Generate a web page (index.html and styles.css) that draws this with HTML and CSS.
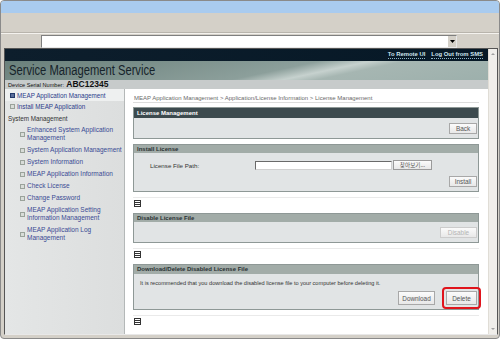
FILE: index.html
```html
<!DOCTYPE html>
<html>
<head>
<meta name="viewport" content="width=device-width, initial-scale=1">
<link rel="stylesheet" href="styles.css">
<title>Service Management Service</title>
</head>
<body>

<div class="window">
    <div class="titlebar"></div>
    <div class="toolbar"></div>
    <div class="addressbar">
        <div class="address">
            <span class="drop"><svg width="5" height="3" viewBox="0 0 5 3"><path d="M0 0h5L2.5 3z" fill="#000"/></svg></span>
        </div>
    </div>

    <div class="viewport">
        <div class="page">
            <div class="topbar">
                <a class="toplink">To Remote UI</a>
                <a class="toplink">Log Out from SMS</a>
            </div>
            <div class="titleband"><span class="title_text">Service Management Service</span></div>
            <div class="serial"><span class="serial_label">Device Serial Number:</span> <b>ABC12345</b></div>

            <div class="mainrow">
                <div class="sidebar">
                    <div class="nav_item selected"><span class="bullet dark"></span>MEAP Application Management</div>
                    <div class="nav_item short"><span class="bullet"></span>Install MEAP Application</div>
                    <div class="nav_head">System Management</div>
                    <div class="sub_item"><span class="bullet"></span><span>Enhanced System Application Management</span></div>
                    <div class="sub_item"><span class="bullet"></span><span>System Application Management</span></div>
                    <div class="sub_item"><span class="bullet"></span><span>System Information</span></div>
                    <div class="sub_item"><span class="bullet"></span><span>MEAP Application Information</span></div>
                    <div class="sub_item"><span class="bullet"></span><span>Check License</span></div>
                    <div class="sub_item"><span class="bullet"></span><span>Change Password</span></div>
                    <div class="sub_item"><span class="bullet"></span><span>MEAP Application Setting Information Management</span></div>
                    <div class="sub_item"><span class="bullet"></span><span>MEAP Application Log Management</span></div>
                </div>

                <div class="content">
                    <div class="crumbs">MEAP Application Management &gt; Application/License Information &gt; License Management</div>

                    <div class="panel">
                        <div class="panel_head dark_head">License Management</div>
                        <div class="panel_body right">
                            <button class="btn">Back</button>
                        </div>
                    </div>

                    <div class="panel">
                        <div class="panel_head">Install License</div>
                        <div class="panel_body install_body">
                            <div class="file_row">
                                <span class="file_label">License File Path:</span>
                                <span class="file_input"></span>
                                <button class="btn browse">찾아보기...</button>
                            </div>
                            <div class="right"><button class="btn">Install</button></div>
                        </div>
                    </div>
                    <div class="sep"><span class="top_icon"></span></div>

                    <div class="panel">
                        <div class="panel_head">Disable License File</div>
                        <div class="panel_body right">
                            <button class="btn disabled">Disable</button>
                        </div>
                    </div>
                    <div class="sep"><span class="top_icon"></span></div>

                    <div class="panel">
                        <div class="panel_head tall_head">Download/Delete Disabled License File</div>
                        <div class="panel_body download_body">
                            <div class="note">It is recommended that you download the disabled license file to your computer before deleting it.</div>
                            <div class="right wide_gap">
                                <button class="btn download">Download</button>
                                <span class="highlight"><button class="btn delete">Delete</button></span>
                            </div>
                        </div>
                    </div>
                    <div class="sep"><span class="top_icon"></span></div>
                </div>
            </div>
        </div>
        <div class="scrollbar">
            <span class="arrow up"></span>
            <span class="arrow down"></span>
        </div>
    </div>
    <div class="statusbar"></div>
</div>

</body>
</html>
```

FILE: styles.css
```css
body {
    margin: 0;
    background-color: #ffffff;
    font-family: "Liberation Sans", Arial, sans-serif;
}

.window {
    width: 498px;
    height: 337px;
    border: 1px solid #8a8a8a;
    border-radius: 4px;
    background-color: #d4d0c8;
    display: flex;
    flex-direction: column;
    overflow: hidden;
}

.titlebar {
    height: 12px;
    background-color: #a9cbef;
}

.toolbar {
    height: 19px;
    border-bottom: 1px solid #b8b4ac;
}

.addressbar {
    height: 14px;
    padding-left: 40px;
    border-top: 1px solid #f4f2ee;
}

.address {
    width: 414px;
    height: 11px;
    margin-top: 1px;
    background-color: #ffffff;
    border: 1px solid #7f7f7f;
    border-right-color: #e8e8e8;
    border-bottom-color: #e8e8e8;
    display: flex;
    justify-content: flex-end;
}

.drop {
    width: 8px;
    height: 11px;
    background-color: #d4d0c8;
    border-left: 1px solid #ffffff;
    display: flex;
    align-items: center;
    justify-content: center;
}

.viewport {
    flex: 1;
    display: flex;
    margin-left: 3px;
    margin-right: 1px;
    border: 1px solid #555555;
    border-bottom-color: #e8e8e8;
    min-height: 0;
}

.page {
    flex: 1;
    display: flex;
    flex-direction: column;
    background-color: #ffffff;
}

.topbar {
    height: 12px;
    flex-shrink: 0;
    background: linear-gradient(to right, #0d1e2c, #061826);
    display: flex;
    justify-content: flex-end;
    align-items: center;
    gap: 6px;
    padding-right: 5px;
}

.toplink {
    color: #cfe6ee;
    font-size: 5.9px;
    font-weight: bold;
    border-bottom: 1px dotted #8fb4c4;
    line-height: 7px;
}

.titleband {
    height: 19px;
    flex-shrink: 0;
    background: linear-gradient(168deg, #6a807b 0%, #8c9f9b 55%, #c6d1ce 64%, #a6b6b2 70%, #9db0ac 100%);
    padding-left: 4px;
}

.title_text {
    display: inline-block;
    color: #16232a;
    font-size: 14px;
    line-height: 19px;
    transform: scaleX(0.8);
    transform-origin: left center;
    white-space: nowrap;
}

.serial {
    height: 9px;
    flex-shrink: 0;
    background-color: #c7cbcb;
    font-size: 8.5px;
    line-height: 9px;
    padding-left: 3px;
    color: #111111;
}

.serial_label {
    font-size: 5.6px;
}

.mainrow {
    flex: 1;
    display: flex;
    min-height: 0;
}

.sidebar {
    width: 119px;
    flex-shrink: 0;
    background: linear-gradient(to right, #e4e6e6, #dcdede);
    border-right: 1px solid #b4b8b8;
}

.nav_item {
    font-size: 6.3px;
    color: #2c3d8a;
    height: 12px;
    display: flex;
    align-items: center;
    padding-left: 5px;
}

.nav_item.short {
    height: 11px;
}

.nav_item.selected {
    background-color: #eef0f0;
}

.nav_head {
    font-size: 6.3px;
    color: #333333;
    height: 12px;
    display: flex;
    align-items: center;
    padding-left: 3px;
}

.sub_item {
    font-size: 6.5px;
    color: #3a4a94;
    display: flex;
    align-items: center;
    padding: 2px 0 2px 15px;
    line-height: 8px;
}

.bullet {
    width: 3px;
    height: 3px;
    border: 1px solid #9aa29a;
    background-color: #d8dcd8;
    margin-right: 2px;
    flex-shrink: 0;
}

.bullet.dark {
    border-color: #233a6a;
    background-color: #5a6e9a;
}

.content {
    flex: 1;
    padding: 3px 9px 0 8px;
    overflow: hidden;
}

.crumbs {
    font-size: 6px;
    line-height: 7px;
    color: #6a6a6a;
    padding: 3px 0 0 1px;
    border-bottom: 1px solid #dcdcdc;
    margin-bottom: 4px;
}

.panel {
    border: 1px solid #8e9896;
    margin-bottom: 5px;
}

.panel_head {
    height: 8px;
    background-color: #a2aca8;
    font-size: 6px;
    font-weight: bold;
    color: #2a3234;
    line-height: 8px;
    padding-left: 3px;
}

.tall_head {
    height: 9px;
    line-height: 9px;
}

.dark_head {
    height: 10px;
    line-height: 10px;
    background-color: #3c4a4e;
    color: #ffffff;
}

.panel_body {
    background-color: #e1e4e5;
    padding: 5px 1px 4px 3px;
}

.install_body {
    padding-top: 7px;
}

.download_body {
    padding-top: 6px;
}

.right {
    display: flex;
    justify-content: flex-end;
    gap: 7px;
}

.wide_gap {
    gap: 11px;
}

.btn {
    font-family: inherit;
    font-size: 6.4px;
    color: #555555;
    background: linear-gradient(#fbfbfb, #e8e8e8);
    border: 1px solid #a8a8a8;
    height: 11px;
    width: 28px;
    padding: 0;
}

.btn.disabled {
    width: 37px;
    color: #b4b4b4;
    border-color: #cccccc;
}

.btn.download {
    width: 37px;
    height: 14px;
}

.btn.delete {
    width: 31px;
    height: 14px;
}

.browse {
    height: 10px;
    width: 39px;
    font-size: 5.6px;
    font-family: "Noto Sans CJK KR", sans-serif;
    border-color: #9a9a9a;
}

.file_row {
    display: flex;
    align-items: center;
    margin-bottom: 6px;
}

.file_label {
    font-size: 6.2px;
    color: #333333;
    width: 105px;
    padding-left: 13px;
}

.file_input {
    width: 135px;
    height: 7px;
    background-color: #ffffff;
    border: 1px solid #6a6a6a;
    border-right-color: #d0d0d0;
    border-bottom-color: #d0d0d0;
    margin-right: 1px;
}

.note {
    font-size: 5.6px;
    line-height: 7px;
    color: #333333;
    padding-left: 3px;
    margin-bottom: 4px;
}

.highlight {
    position: relative;
    display: flex;
}

.highlight::after {
    content: "";
    position: absolute;
    top: -4px;
    bottom: -4px;
    left: -4px;
    right: -4px;
    border: 2px solid #e0141c;
    border-radius: 4px;
}

.sep {
    border-top: 1px solid #eaeaea;
    padding: 2px 0 6px 1px;
}

.top_icon {
    display: block;
    width: 5px;
    height: 5px;
    border: 1px solid #333333;
    background: linear-gradient(#ffffff 20%, #333333 20%, #333333 40%, #ffffff 40%, #ffffff 60%, #333333 60%, #333333 80%, #ffffff 80%);
}

.scrollbar {
    width: 8px;
    background-color: #f0eeea;
    border-left: 1px solid #e0ddd6;
    display: flex;
    flex-direction: column;
    justify-content: space-between;
    align-items: center;
    padding: 4px 0;
}

.arrow {
    width: 0;
    height: 0;
    border-left: 2px solid transparent;
    border-right: 2px solid transparent;
}

.arrow.up {
    border-bottom: 2px solid #a0a0a0;
}

.arrow.down {
    border-top: 2px solid #a0a0a0;
}

.statusbar {
    height: 3px;
}
```
